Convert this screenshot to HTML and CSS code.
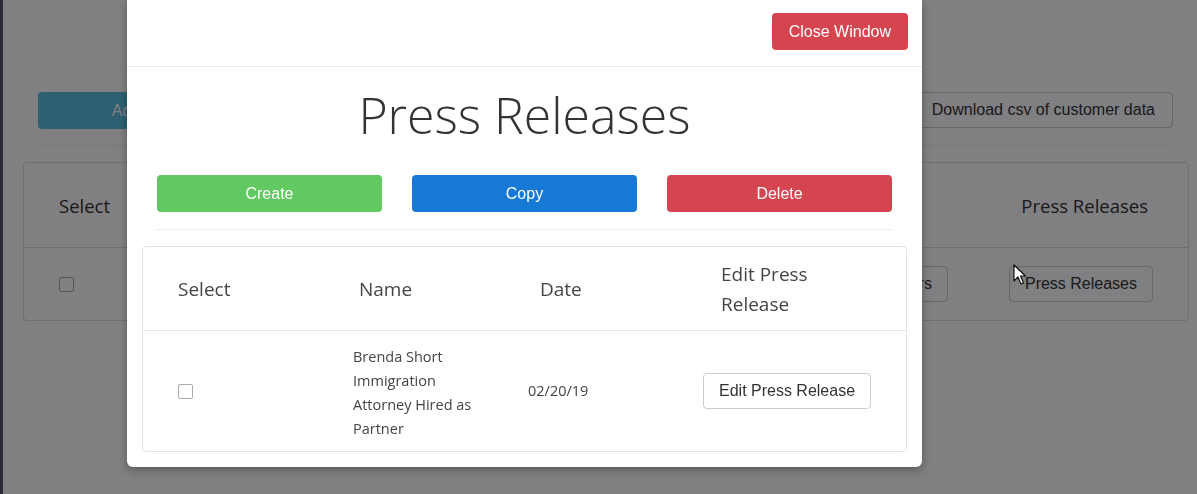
FILE: index.html
```
<!DOCTYPE html>
<html lang="en">
<head>
    <meta charset="UTF-8">
    <meta name="viewport" content="width=device-width, initial-scale=1.0">
    <title>Customers - Press Releases</title>
    <link rel="stylesheet" href="styles.css">
</head>
<body>
    <div class="edge"></div>

    <!-- page behind the modal -->
    <div class="page">
        <div class="toolbar">
            <button class="btn btn-info add-btn">Add Customer</button>
            <button class="btn btn-default">Download csv of customer data</button>
        </div>
        <hr class="page-rule">
        <div class="panel">
            <div class="panel-head">
                <span>Select</span>
                <span>Press Releases</span>
            </div>
            <div class="panel-row">
                <input type="checkbox" class="check">
                <div class="row-actions">
                    <button class="btn btn-default">Customers</button>
                    <button class="btn btn-default">Press Releases</button>
                </div>
            </div>
        </div>
    </div>

    <div class="backdrop"></div>

    <!-- Press releases modal -->
    <div class="modal">
        <div class="modal-header">
            <button class="btn btn-danger close-btn">Close Window</button>
        </div>
        <div class="modal-body">
            <h1 class="modal-title">Press Releases</h1>
            <div class="actions">
                <button class="btn btn-success">Create</button>
                <button class="btn btn-primary">Copy</button>
                <button class="btn btn-danger">Delete</button>
            </div>
            <hr class="modal-rule">
            <div class="release-table">
                <div class="release-head">
                    <div class="cell">Select</div>
                    <div class="cell">Name</div>
                    <div class="cell">Date</div>
                    <div class="cell edit-col">Edit Press Release</div>
                </div>
                <div class="release-row">
                    <div class="cell"><input type="checkbox" class="check"></div>
                    <div class="cell name">Brenda Short Immigration Attorney Hired as Partner</div>
                    <div class="cell">02/20/19</div>
                    <div class="cell"><button class="btn btn-default edit-btn">Edit Press Release</button></div>
                </div>
            </div>
        </div>
    </div>

    <svg class="cursor" width="14" height="22" viewBox="0 0 14 22">
        <path d="M1 1 L1 17 L5 13 L8 20 L10.5 19 L7.5 12 L12.5 12 Z" fill="#fff" stroke="#111" stroke-width="1.2" stroke-linejoin="round"/>
    </svg>
</body>
</html>
```

FILE: styles.css
```
body {
    margin: 0;
    background-color: #fff;
    font-family: "Open Sans", sans-serif;
    color: #333;
    height: 494px;
    overflow: hidden;
}

.edge {
    position: fixed;
    left: 0;
    top: 0;
    bottom: 0;
    width: 3px;
    background-color: #2b2633;
    z-index: 5;
}

/* generic buttons */
.btn {
    font-family: "Liberation Sans", Arial, sans-serif;
    font-size: 16px;
    height: 37px;
    padding: 0 17px;
    border: 1px solid transparent;
    border-radius: 4px;
    white-space: nowrap;
    cursor: pointer;
}

.btn-default {
    background-color: #fff;
    border-color: #ccc;
    color: #333;
    height: 36px;
}

.btn-info {
    background-color: #5bc0de;
    color: #fff;
}

.btn-success {
    background-color: #62c862;
    color: #fff;
}

.btn-primary {
    background-color: #1679d6;
    color: #fff;
}

.btn-danger {
    background-color: #d5454f;
    color: #fff;
}

/* background page */
.page {
    padding: 92px 8px 0 23px;
}

.toolbar {
    display: flex;
    justify-content: space-between;
    padding: 0 16px 0 15px;
}

.add-btn {
    width: 250px;
}

.page-rule {
    border: none;
    border-top: 1px solid #eee;
    margin: 16px 16px 16px 15px;
}

.panel {
    border: 1px solid #ddd;
    border-radius: 4px;
}

.panel-head {
    display: flex;
    justify-content: space-between;
    align-items: center;
    height: 84px;
    padding: 0 40px 0 35px;
    font-size: 18.5px;
    border-bottom: 1px solid #ddd;
}

.panel-row {
    display: flex;
    align-items: center;
    height: 72px;
    padding: 0 35px 0 35px;
}

.row-actions {
    margin-left: auto;
    display: flex;
    gap: 61px;
}

.row-actions .btn {
    padding: 0 15px;
}

.check {
    appearance: none;
    margin: 0;
    width: 15px;
    height: 15px;
    border: 1px solid #aaa;
    border-radius: 2px;
    background-color: #fff;
}

.backdrop {
    position: fixed;
    inset: 0;
    background-color: rgba(2, 0, 4, 0.5);
}

/* modal */
.modal {
    position: absolute;
    left: 127px;
    top: 0;
    width: 795px;
    background-color: #fff;
    border-radius: 0 0 6px 6px;
    box-shadow: 0 3px 9px rgba(0, 0, 0, 0.3);
}

.modal-header {
    display: flex;
    justify-content: flex-end;
    padding: 13px 14px 16px;
    border-bottom: 1px solid #eaeaea;
}

.close-btn {
    padding: 0 16px;
}

.modal-body {
    padding: 15px;
}

.modal-title {
    margin: 0;
    padding-top: 7px;
    text-align: center;
    font-size: 50px;
    font-weight: 300;
    line-height: 53px;
    color: #333;
}

.actions {
    display: grid;
    grid-template-columns: repeat(3, 1fr);
    gap: 30px;
    padding: 0 15px;
    margin-top: 33px;
}

.modal-rule {
    border: none;
    border-top: 1px solid #eee;
    margin: 17px 14px 16px 13px;
}

.release-table {
    border: 1px solid #e3e3e3;
    border-radius: 4px;
    color: #444;
}

.release-head {
    display: grid;
    grid-template-columns: 181px 181px 181px 1fr;
    align-items: center;
    height: 83px;
    padding-left: 17px;
    font-size: 19px;
    line-height: 30px;
    border-bottom: 1px solid #e5e5e5;
}

.release-head .cell {
    padding: 0 18px;
}

.release-head .edit-col {
    max-width: 120px;
}

.release-row {
    display: grid;
    grid-template-columns: 175px 175px 175px 1fr;
    align-items: center;
    height: 120px;
    padding-left: 17px;
    font-size: 14.5px;
    line-height: 24px;
}

.release-row .cell {
    padding-left: 18px;
    display: flex;
    align-items: center;
}

.release-row .name {
    max-width: 130px;
    padding-top: 3px;
}

.edit-btn {
    padding: 0 15px;
}

.cursor {
    position: absolute;
    left: 1013px;
    top: 264px;
}
```
